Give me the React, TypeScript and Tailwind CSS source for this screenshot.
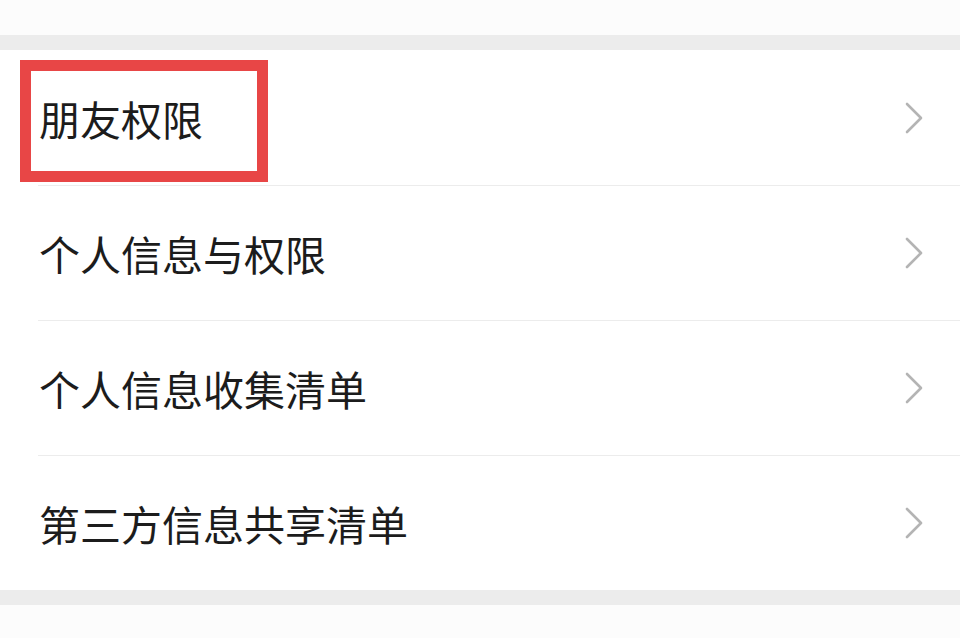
const items = ["朋友权限", "个人信息与权限", "个人信息收集清单", "第三方信息共享清单"];

function Chevron() {
  return (
    <svg width="20" height="32" viewBox="0 0 20 32" className="shrink-0">
      <polyline points="3,2 17,16 3,30" fill="none" stroke="#b4b4b4" strokeWidth="2.6" strokeLinecap="round" strokeLinejoin="round" />
    </svg>
  );
}

export default function App() {
  return (
    <div className="w-[960px] h-[638px] bg-white overflow-hidden" style={{ fontFamily: '"Noto Sans CJK SC", "Noto Sans", sans-serif' }}>
      <div className="h-[35px] bg-[#fcfcfc]" />
      <div className="h-[15px] bg-[#ececec]" />
      <div className="bg-white">
        {items.map((label, i) => (
          <div key={label} className="relative">
            {i > 0 && <div className="ml-[38px] h-px bg-[#ececec]" />}
            <div className={`flex items-center justify-between pl-[39px] pr-[36px] ${i > 0 ? "h-[134px]" : "h-[135px]"}`}>
              <span className="text-[41px] leading-none text-[#1c1c1c] pt-[1px]">{label}</span>
              <Chevron />
            </div>
            {i === 0 && (
              <div className="absolute left-[20px] top-[10px] w-[248px] h-[122px] border-[11px] border-[#e84646]" />
            )}
          </div>
        ))}
      </div>
      <div className="h-[15px] bg-[#ececec]" />
      <div className="h-[33px] bg-[#fcfcfc]" />
    </div>
  );
}
